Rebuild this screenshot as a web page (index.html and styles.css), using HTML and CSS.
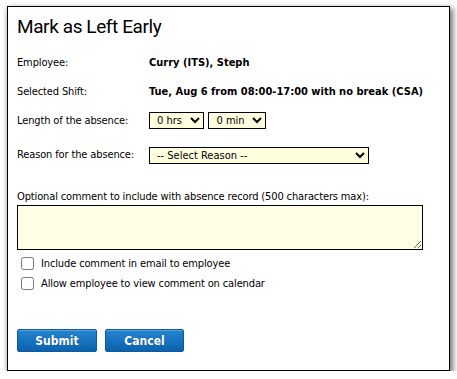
FILE: index.html
```html
<!DOCTYPE html>
<html lang="en">
<head>
<meta charset="UTF-8">
<title>Mark as Left Early</title>
<link rel="stylesheet" href="styles.css">
</head>
<body>
<div class="dialog">
    <h1 class="title">Mark as Left Early</h1>

    <div class="row">
        <div class="label">Employee:</div>
        <div class="value">Curry (ITS), Steph</div>
    </div>
    <div class="row">
        <div class="label">Selected Shift:</div>
        <div class="value">Tue, Aug 6 from 08:00-17:00 with no break (CSA)</div>
    </div>
    <div class="row">
        <div class="label">Length of the absence:</div>
        <div class="value">
            <select class="pick hrs"><option>0 hrs</option></select>
            <select class="pick min"><option>0 min</option></select>
        </div>
    </div>
    <div class="row reason">
        <div class="label">Reason for the absence:</div>
        <div class="value">
            <select class="pick wide"><option>-- Select Reason --</option></select>
        </div>
    </div>

    <div class="comment">
        <div class="comment_label">Optional comment to include with absence record (500 characters max):</div>
        <textarea class="comment_box"></textarea>
    </div>

    <div class="checks">
        <label class="check"><input type="checkbox"> Include comment in email to employee</label>
        <label class="check"><input type="checkbox"> Allow employee to view comment on calendar</label>
    </div>

    <div class="actions">
        <button class="btn submit">Submit</button>
        <button class="btn cancel">Cancel</button>
    </div>
</div>
</body>
</html>
```

FILE: styles.css
```css
body {
    margin: 0;
    background: #fff;
    font-family: "DejaVu Sans Condensed", "Liberation Sans", sans-serif;
    font-size: 11px;
    color: #000;
}
.dialog {
    margin: 6px 0 0 7px;
    width: 443px;
    height: 365px;
    border: 1px solid #000;
    box-shadow: 2px 3px 6px 1px rgba(0, 0, 0, 0.55);
    padding: 0 0 0 9px;
    box-sizing: border-box;
}
.title {
    margin: 0;
    padding-top: 8px;
    height: 33px;
    font-family: Roboto, "Liberation Sans", sans-serif;
    font-size: 19px;
    font-weight: normal;
    letter-spacing: -0.4px;
    line-height: 24px;
}
.label, .comment_label, .check {
    letter-spacing: -0.13px;
}
.row {
    display: grid;
    grid-template-columns: 132px auto;
    align-items: center;
    height: 29px;
}
.row.reason {
    height: 44px;
    align-items: start;
    padding-top: 12px;
    box-sizing: border-box;
}
.row.reason .label {
    line-height: 16px;
}
.value {
    font-weight: bold;
}
.pick {
    height: 17px;
    border: 1px solid #000;
    border-radius: 0;
    background: #ffffe0;
    font-family: inherit;
    font-size: 11px;
    padding: 0 0 0 3px;
    margin: 0;
    vertical-align: top;
}
.hrs { width: 55px; }
.min { width: 58px; margin-left: 1px; }
.wide { width: 220px; }
.comment {
    padding-top: 11px;
}
.comment_label {
    line-height: 14px;
}
.comment_box {
    display: block;
    width: 406px;
    height: 45px;
    margin: 1px 0 0;
    box-sizing: border-box;
    border: 1px solid #000;
    background: #ffffe6;
    resize: vertical;
}
.checks {
    margin-top: 3px;
}
.check {
    display: flex;
    align-items: center;
    height: 20px;
}
.check input {
    margin: 0 7px 0 4px;
    width: 13px;
    height: 13px;
}
.actions {
    display: flex;
    gap: 8px;
    margin-top: 36px;
}
.btn {
    height: 23px;
    border: 1px solid #0b5b9e;
    border-radius: 2px;
    background: linear-gradient(#2584d0, #0b62ac);
    box-shadow: inset 0 1px 0 rgba(255, 255, 255, 0.25);
    color: #fff;
    font-family: inherit;
    font-size: 12px;
    font-weight: bold;
    text-shadow: 0 0 1px rgba(0, 40, 90, 0.6);
    padding: 0;
}
.submit { width: 80px; }
.cancel { width: 79px; }
```
